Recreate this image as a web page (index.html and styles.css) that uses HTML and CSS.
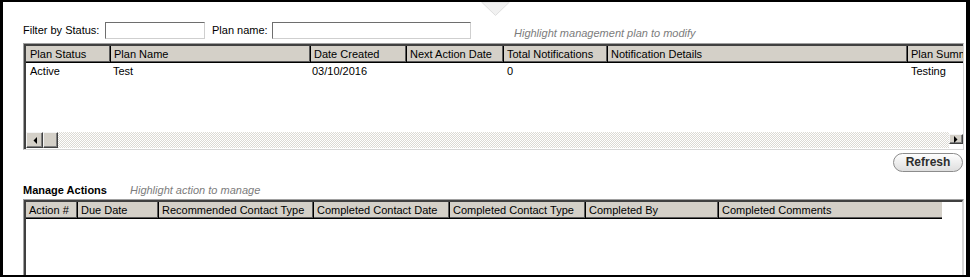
FILE: index.html
```html
<!DOCTYPE html>
<html lang="en">
<head>
<meta charset="utf-8">
<title>Management Plans</title>
<link rel="stylesheet" href="styles.css">
</head>
<body>
<div class="panel">
  <svg class="notch" width="30" height="15" viewBox="0 0 30 15"><polygon points="0.5,0 28.5,0 14.5,13.5" fill="#f1f1f1" stroke="#dedede" stroke-width="1"/></svg>

  <div class="filters">
    <label class="lbl lbl-status">Filter by Status:</label>
    <input class="inp inp-status" type="text">
    <label class="lbl lbl-name">Plan name:</label>
    <input class="inp inp-name" type="text">
    <span class="hint hint-plan">Highlight management plan to modify</span>
  </div>

  <div class="grid grid-plans">
    <div class="grid-inner plans-inner">
      <div class="row hrow">
        <div class="cell hcell p1">Plan Status</div>
        <div class="cell hcell p2">Plan Name</div>
        <div class="cell hcell p3">Date Created</div>
        <div class="cell hcell p4">Next Action Date</div>
        <div class="cell hcell p5">Total Notifications</div>
        <div class="cell hcell p6">Notification Details</div>
        <div class="cell hcell p7">Plan Summary</div>
      </div>
      <div class="row drow">
        <div class="cell dcell p1">Active</div>
        <div class="cell dcell p2">Test</div>
        <div class="cell dcell p3">03/10/2016</div>
        <div class="cell dcell p4"></div>
        <div class="cell dcell p5">0</div>
        <div class="cell dcell p6"></div>
        <div class="cell dcell p7">Testing</div>
      </div>
      <div class="fill"></div>
      <div class="hscroll">
        <div class="sbtn sbtn-left"><svg width="4" height="7" viewBox="0 0 4 7"><polygon points="4,0 4,7 0.5,3.5" fill="#000"/></svg></div>
        <div class="sthumb"></div>
        <div class="strack"></div>
        <div class="sbtn sbtn-right"><svg width="4" height="7" viewBox="0 0 4 7"><polygon points="0,0 0,7 3.5,3.5" fill="#000"/></svg></div>
      </div>
    </div>
  </div>

  <div class="actions-bar">
    <button class="refresh" type="button">Refresh</button>
  </div>

  <div class="section-head">
    <span class="section-title">Manage Actions</span>
    <span class="hint hint-actions">Highlight action to manage</span>
  </div>

  <div class="grid grid-actions">
    <div class="grid-inner actions-inner">
      <div class="row hrow">
        <div class="cell hcell a1">Action #</div>
        <div class="cell hcell a2">Due Date</div>
        <div class="cell hcell a3">Recommended Contact Type</div>
        <div class="cell hcell a4">Completed Contact Date</div>
        <div class="cell hcell a5">Completed Contact Type</div>
        <div class="cell hcell a6">Completed By</div>
        <div class="cell hcell a7 last">Completed Comments</div>
      </div>
    </div>
  </div>
</div>
</body>
</html>
```

FILE: styles.css
```css
html, body {
  margin: 0;
  background: #000;
}

body {
  padding: 2px 4px 2px 3px;
  font-family: "Liberation Sans", Arial, sans-serif;
  font-size: 11px;
  color: #000;
}

.panel {
  position: relative;
  width: 963px;
  height: 273px;
  box-sizing: border-box;
  padding: 20px 0 0 20px;
  background: #fff;
  overflow: hidden;
  display: flex;
  flex-direction: column;
}

.notch {
  position: absolute;
  left: 478px;
  top: 0;
  display: block;
}

/* filter row */
.filters {
  display: flex;
  align-items: center;
  height: 17px;
}

.lbl {
  line-height: 13px;
  white-space: nowrap;
}

.lbl-status { width: 82px; }
.lbl-name { width: 60px; margin-left: 7px; }

.inp {
  box-sizing: border-box;
  height: 17px;
  margin: 0;
  padding: 0 2px;
  border: 1px solid;
  border-color: #6e6e6e #cfcfcf #cfcfcf #6e6e6e;
  background: #fff;
  font: inherit;
}

.inp-status { width: 100px; }
.inp-name { width: 199px; }

.hint {
  font-style: italic;
  color: #7c7c7c;
  line-height: 13px;
  white-space: nowrap;
}

.hint-plan {
  margin-left: 43px;
  align-self: flex-end;
  margin-bottom: -1px;
}

/* grids */
.grid {
  width: 941px;
  box-sizing: border-box;
  border: 1px solid;
  border-color: #a0a0a0 #d6d6d6 #d6d6d6 #a0a0a0;
  flex: none;
}

.grid-inner {
  border-top: 2px solid #404040;
  border-left: 2px solid #404040;
  overflow: hidden;
  display: flex;
  flex-direction: column;
}

.grid-plans { margin-top: 4px; }

.plans-inner { height: 103px; }

.row {
  display: flex;
  flex: none;
  white-space: nowrap;
}

.cell {
  flex: none;
  box-sizing: border-box;
  overflow: hidden;
}

.hcell {
  height: 17px;
  line-height: 16px;
  padding-left: 3px;
  background: #d4d0c8;
  border-right: 1px solid #000;
  border-bottom: 1px solid #000;
  box-shadow: inset -1px -1px 0 #5a5a5a;
}

.hcell.last {
  border-right: 0;
  box-shadow: inset 0 -1px 0 #5a5a5a;
}

.drow .dcell {
  height: 16px;
  line-height: 16px;
  padding-left: 3px;
}

.p1 { width: 85px; padding-left: 4px; }
.p2 { width: 200px; }
.p3 { width: 96px; }
.p4 { width: 97px; }
.p5 { width: 104px; }
.p6 { width: 300px; }
.p7 { width: 90px; }

.drow .p2 { padding-left: 2px; }
.drow .p3 { padding-left: 1px; }
.drow .p1 { padding-left: 4px; }

.a1 { width: 52px; padding-left: 3px; }
.a2 { width: 81px; }
.a3 { width: 155px; }
.a4 { width: 136px; }
.a5 { width: 136px; }
.a6 { width: 133px; }
.a7 { width: 223px; }

.fill { flex: 1; }

/* horizontal scrollbar */
.hscroll {
  display: flex;
  height: 16px;
  margin-bottom: 1px;
  flex: none;
}

.sbtn,
.sthumb {
  box-sizing: border-box;
  background: #d4d0c8;
  border: 1px solid;
  border-color: #f4f4f4 #404040 #404040 #f4f4f4;
  box-shadow: inset -1px -1px 0 #808080;
  flex: none;
}

.sbtn {
  display: flex;
  align-items: center;
  justify-content: center;
}

.sbtn svg { display: block; }

.sbtn-left { width: 17px; height: 16px; }
.sthumb { width: 15px; height: 16px; }

.sbtn-right {
  width: 14px;
  height: 10px;
  margin-top: 2px;
}

.strack {
  flex: 1;
  background-color: #fff;
  background-image: conic-gradient(#dcdad4 25%, transparent 0 50%, #dcdad4 0 75%, transparent 0);
  background-size: 2px 2px;
}

/* refresh */
.actions-bar {
  width: 941px;
  display: flex;
  justify-content: flex-end;
  margin-top: 3px;
  flex: none;
}

.refresh {
  box-sizing: border-box;
  width: 70px;
  height: 19px;
  margin: 0 1px 0 0;
  padding: 0;
  border: 1px solid #8c8c8c;
  border-radius: 10px;
  background: linear-gradient(#fefefe, #ebebeb 60%, #dedede);
  font-family: "Liberation Sans", Arial, sans-serif;
  font-size: 12px;
  font-weight: bold;
  color: #2e2e2e;
  line-height: 17px;
}

/* manage actions */
.section-head {
  display: flex;
  align-items: center;
  margin-top: 12px;
  height: 13px;
  flex: none;
}

.section-title {
  font-weight: bold;
  line-height: 13px;
  width: 107px;
}

.grid-actions {
  margin-top: 2px;
  height: 90px;
}

.actions-inner {
  height: 100%;
  box-sizing: border-box;
  border-right: 1px solid #d6d6d6;
  padding-right: 1px;
}
```
